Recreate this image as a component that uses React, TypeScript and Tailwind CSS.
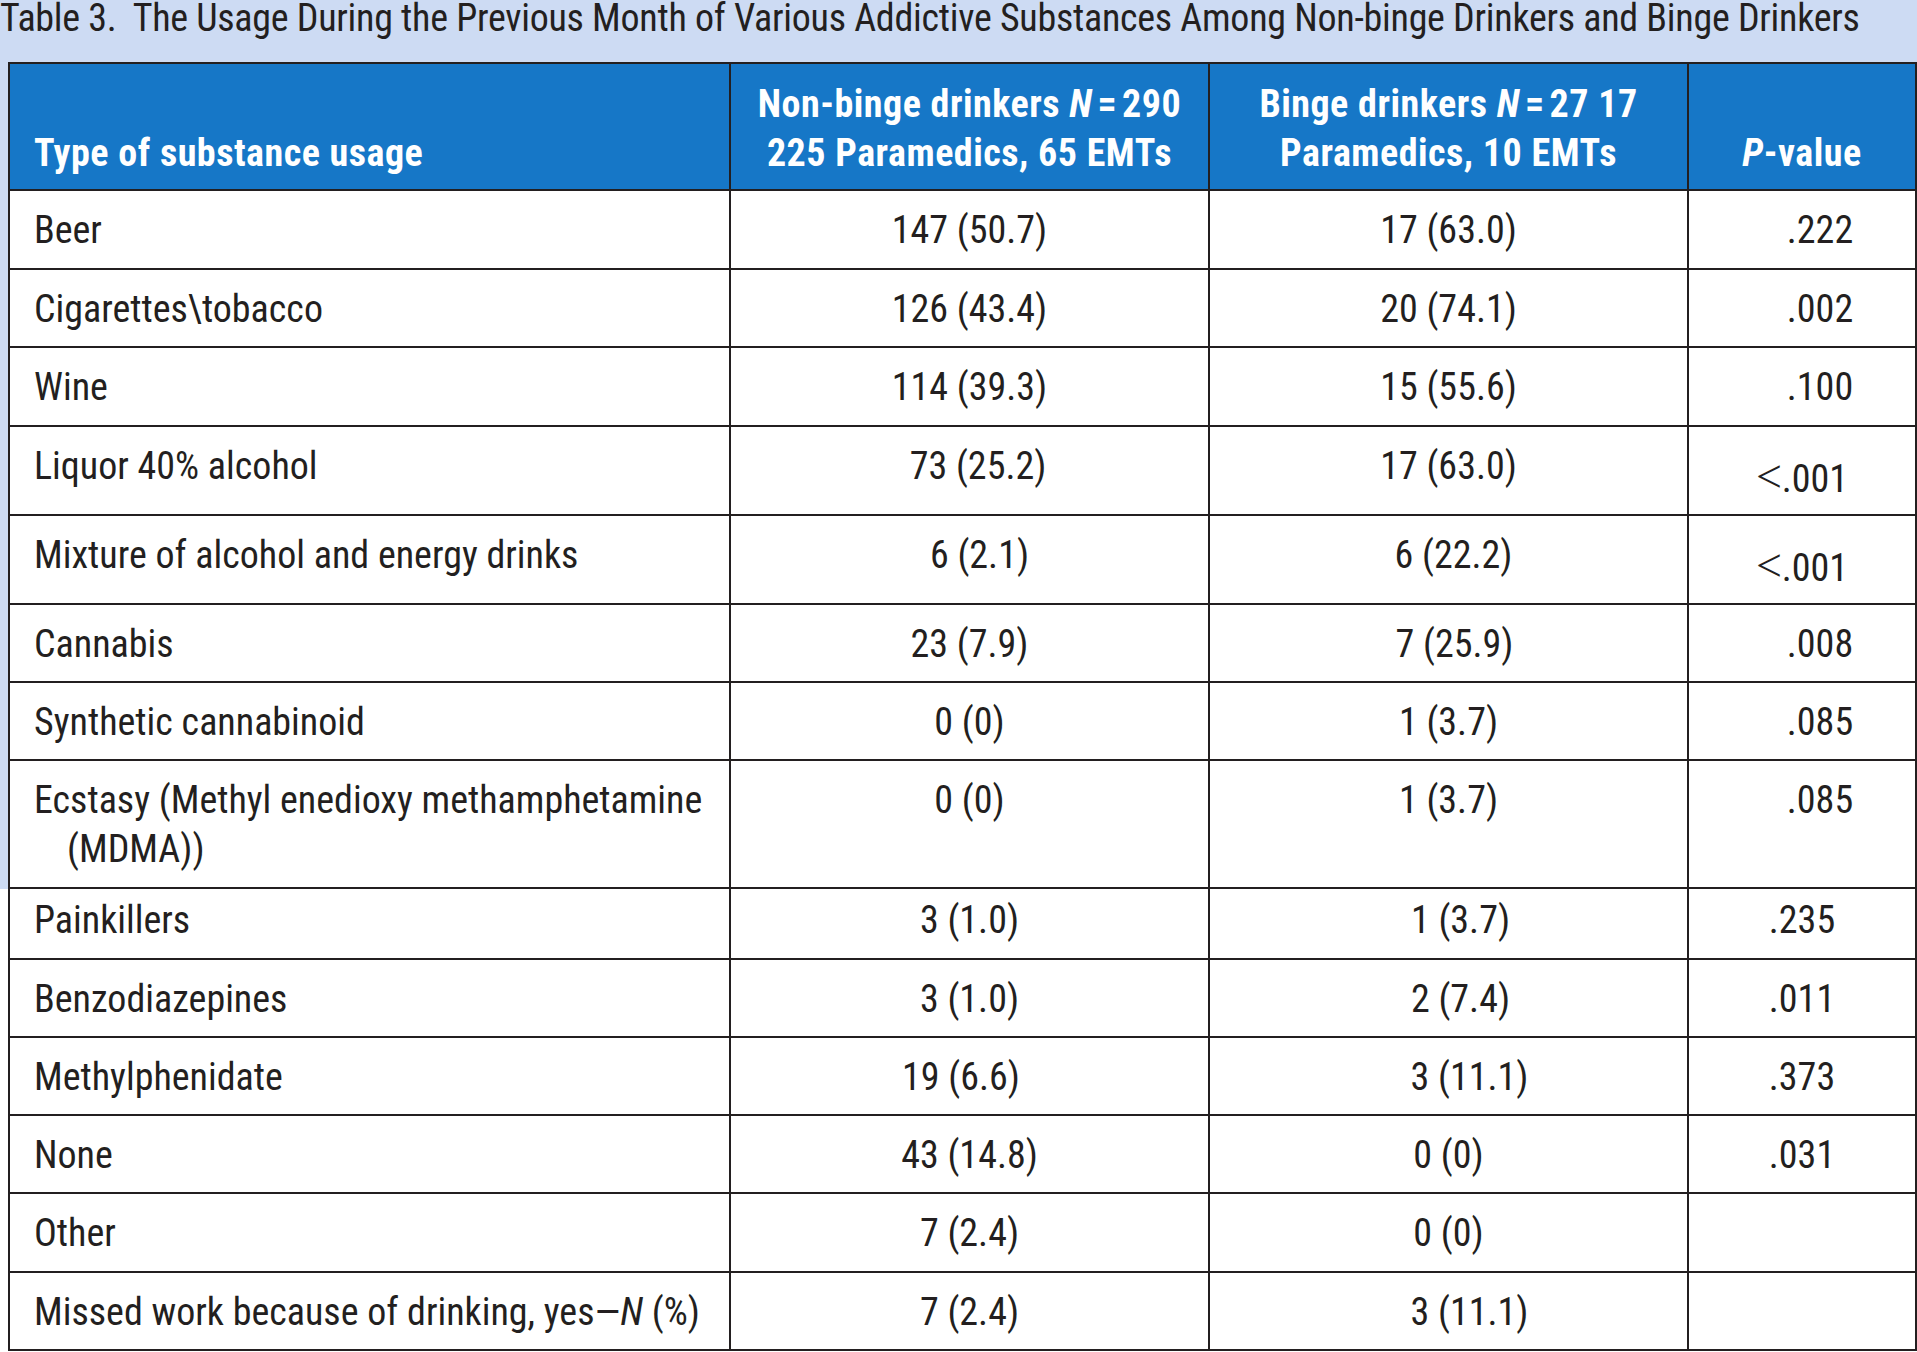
import React from 'react';

type Row = {
  label: React.ReactNode;
  a: string;
  b: string;
  p: React.ReactNode;
  h: string;
  pt: string;
  ppt?: string;
  aS?: string;
  bS?: string;
  pS?: string;
  last?: boolean;
};

const Lt = () => (
  <span className="font-['Liberation_Serif',serif] text-[46px] font-light">&lt;</span>
);

const Eq = () => <span className="mx-[5px]">=</span>;

const rows: Row[] = [
  { label: 'Beer', a: '147 (50.7)', b: '17 (63.0)', p: '.222', h: 'h-[79px]', pt: 'pt-[15px]', pS: 'pl-[36px]' },
  { label: 'Cigarettes\\tobacco', a: '126 (43.4)', b: '20 (74.1)', p: '.002', h: 'h-[78px]', pt: 'pt-[15px]', pS: 'pl-[36px]' },
  { label: 'Wine', a: '114 (39.3)', b: '15 (55.6)', p: '.100', h: 'h-[79px]', pt: 'pt-[15px]', pS: 'pl-[36px]' },
  {
    label: 'Liquor 40% alcohol',
    a: '73 (25.2)',
    b: '17 (63.0)',
    p: (
      <>
        <Lt />.001
      </>
    ),
    h: 'h-[89px]',
    pt: 'pt-[15px]',
    ppt: 'pt-[25px]',
    aS: 'pl-[17px]',
  },
  {
    label: 'Mixture of alcohol and energy drinks',
    a: '6 (2.1)',
    b: '6 (22.2)',
    p: (
      <>
        <Lt />.001
      </>
    ),
    h: 'h-[89px]',
    pt: 'pt-[15px]',
    ppt: 'pt-[25px]',
    aS: 'pl-[20px]',
    bS: 'pl-[10px]',
  },
  { label: 'Cannabis', a: '23 (7.9)', b: '7 (25.9)', p: '.008', h: 'h-[78px]', pt: 'pt-[15px]', bS: 'pl-[12px]', pS: 'pl-[36px]' },
  { label: 'Synthetic cannabinoid', a: '0 (0)', b: '1 (3.7)', p: '.085', h: 'h-[78px]', pt: 'pt-[15px]', pS: 'pl-[36px]' },
  {
    label: (
      <>
        Ecstasy (Methyl enedioxy methamphetamine
        <br />
        <span className="pl-[33px]">(MDMA))</span>
      </>
    ),
    a: '0 (0)',
    b: '1 (3.7)',
    p: '.085',
    h: 'h-[128px]',
    pt: 'pt-[15px]',
    pS: 'pl-[36px]',
  },
  { label: 'Painkillers', a: '3 (1.0)', b: '1 (3.7)', p: '.235', h: 'h-[71px]', pt: 'pt-[7px]', bS: 'pl-[24px]' },
  { label: 'Benzodiazepines', a: '3 (1.0)', b: '2 (7.4)', p: '.011', h: 'h-[78px]', pt: 'pt-[15px]', bS: 'pl-[24px]' },
  { label: 'Methylphenidate', a: '19 (6.6)', b: '3 (11.1)', p: '.373', h: 'h-[78px]', pt: 'pt-[15px]', aS: 'pr-[17px]', bS: 'pl-[42px]' },
  { label: 'None', a: '43 (14.8)', b: '0 (0)', p: '.031', h: 'h-[78px]', pt: 'pt-[15px]' },
  { label: 'Other', a: '7 (2.4)', b: '0 (0)', p: '', h: 'h-[79px]', pt: 'pt-[15px]' },
  {
    label: (
      <>
        Missed work because of drinking, yes—<i>N</i> (%)
      </>
    ),
    a: '7 (2.4)',
    b: '3 (11.1)',
    p: '',
    h: 'h-[76px]',
    pt: 'pt-[15px]',
    bS: 'pl-[42px]',
    last: true,
  },
];

export default function App() {
  return (
    <div className="min-h-[1352px] w-[1917px] overflow-hidden bg-[linear-gradient(to_bottom,#cddbf3_889px,#ffffff_889px)] font-['Roboto_Condensed','Roboto',sans-serif] text-[38px] leading-[49px] text-[#231f20]">
      <div className="h-[62px] whitespace-nowrap pt-[1px] leading-[34px] tracking-[-0.27px]">
        Table 3.&nbsp; The Usage During the Previous Month of Various Addictive Substances Among Non-binge Drinkers and Binge Drinkers
      </div>
      <div className="ml-[8px] w-[1909px] border-2 border-[#231f20] bg-white">
        <div className="flex h-[127px] border-b-2 border-[#231f20] bg-[#1677c7] font-bold tracking-[0.5px] text-white">
          <div className="flex w-[721px] shrink-0 items-end border-r-2 border-[#231f20] pb-[11px] pl-[24px]">
            Type of substance usage
          </div>
          <div className="flex w-[479px] shrink-0 items-end justify-center border-r-2 border-[#231f20] pb-[11px]">
            <div className="text-center">
              Non-binge drinkers <i>N</i>
              <Eq />
              290
              <br />
              225 Paramedics, 65 EMTs
            </div>
          </div>
          <div className="flex w-[479px] shrink-0 items-end justify-center border-r-2 border-[#231f20] pb-[11px]">
            <div className="text-center">
              Binge drinkers <i>N</i>
              <Eq />
              27 17
              <br />
              Paramedics, 10 EMTs
            </div>
          </div>
          <div className="flex w-[226px] shrink-0 items-end justify-center pb-[11px]">
            <div className="text-center">
              <i>P</i>-value
            </div>
          </div>
        </div>
        {rows.map((r, i) => (
          <div key={i} className={`flex ${r.h} ${r.last ? '' : 'border-b-2 border-[#231f20]'}`}>
            <div className={`w-[721px] shrink-0 whitespace-nowrap border-r-2 border-[#231f20] pl-[24px] ${r.pt}`}>{r.label}</div>
            <div className={`w-[479px] shrink-0 whitespace-nowrap border-r-2 border-[#231f20] text-center ${r.pt} ${r.aS ?? ''}`}>{r.a}</div>
            <div className={`w-[479px] shrink-0 whitespace-nowrap border-r-2 border-[#231f20] text-center ${r.pt} ${r.bS ?? ''}`}>{r.b}</div>
            <div className={`w-[226px] shrink-0 whitespace-nowrap text-center ${r.ppt ?? r.pt} ${r.pS ?? ''}`}>{r.p}</div>
          </div>
        ))}
      </div>
    </div>
  );
}
